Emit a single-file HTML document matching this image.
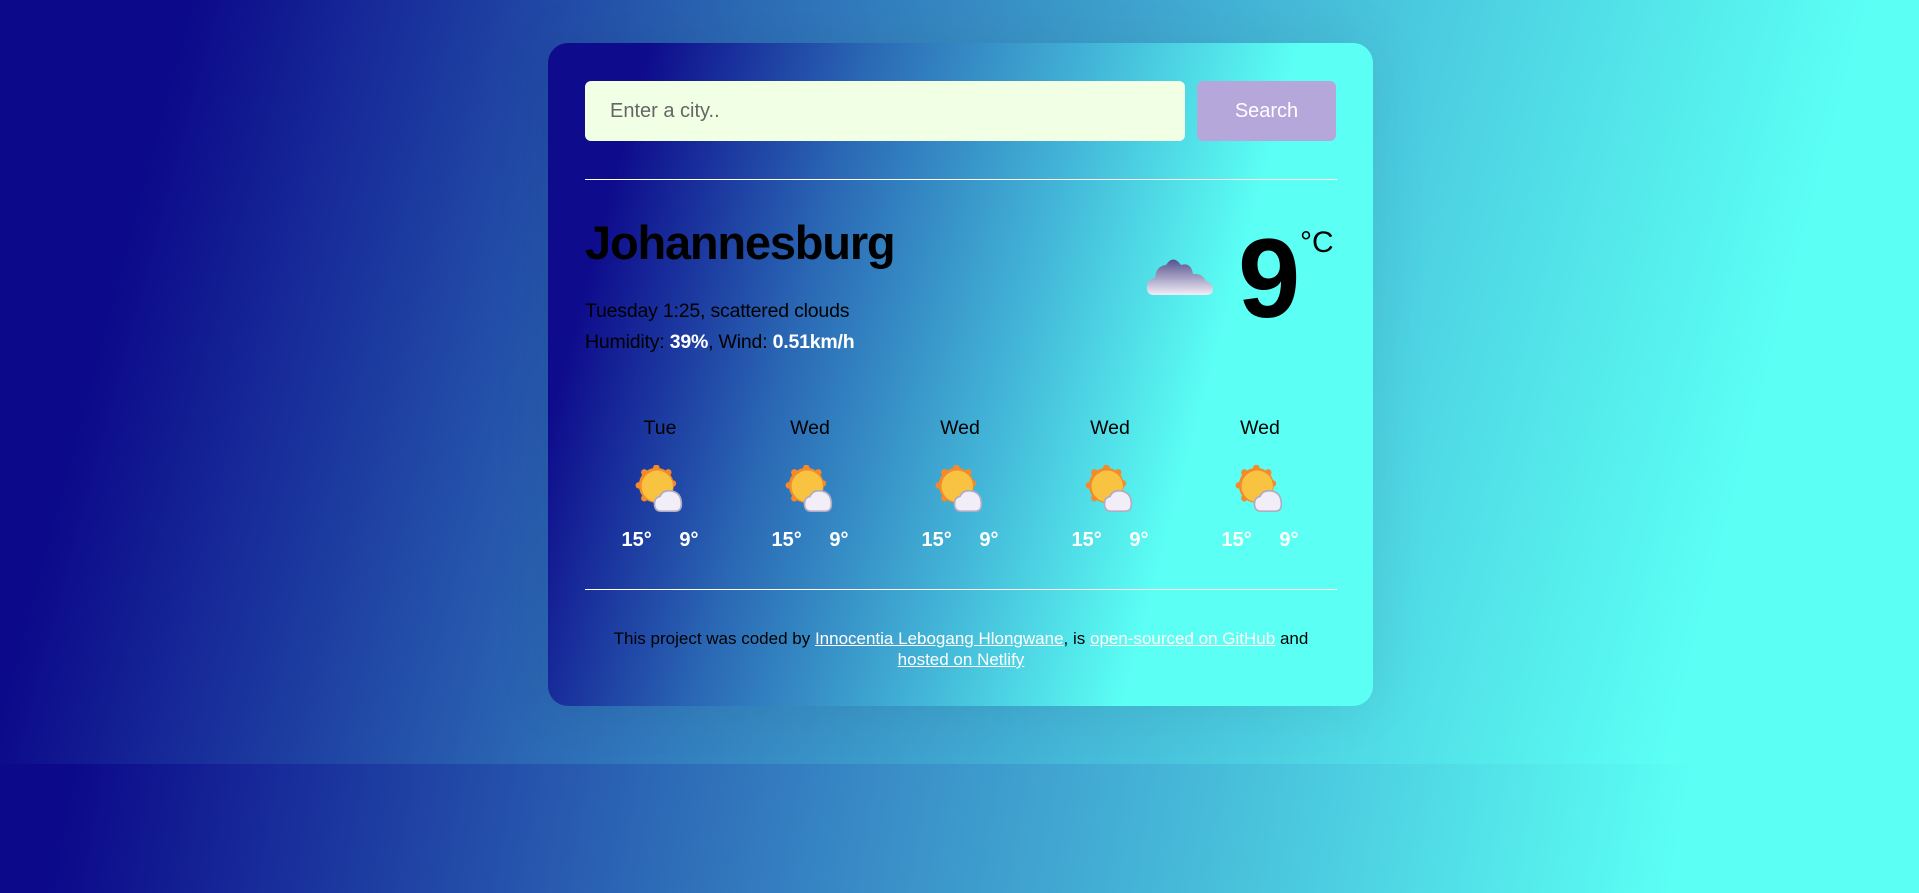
<!DOCTYPE html>
<html><head><meta charset="utf-8"><style>
html{background:linear-gradient(100deg,#0c0a8a 10%,#3a8fc8 50%,#5bfff4 88%);height:893px}
body{margin:0;width:1919px;height:764px;background:linear-gradient(105deg,#0c0a8a 9%,#2c6ab5 35%,#45b8d8 60%,#5bfff4 88%);font-family:"Liberation Sans",Arial,sans-serif;position:relative;overflow:hidden}
.card{position:absolute;left:548px;top:43px;width:825px;height:663px;border-radius:20px;background:linear-gradient(105deg,#0e0b8c 10%,#2a67b4 32%,#43b6d8 55%,#5bfff4 75%);box-shadow:0 0 60px rgba(0,0,0,.08)}
.in{position:absolute;left:37px;top:38px;width:600px;height:60px;background:#f1ffe4;border-radius:6px;font-size:20px;color:#666;line-height:60px;padding-left:25px;box-sizing:border-box}
.btn{position:absolute;left:649px;top:38px;width:139px;height:60px;background:#b5a7da;border-radius:6px;color:#fff;font-size:20px;line-height:60px;text-align:center}
.hr{position:absolute;left:37px;width:752px;height:1px;background:#fff}
.city{position:absolute;left:37px;top:172px;font-size:47px;font-weight:bold;color:#000;letter-spacing:-1.2px}
.line{position:absolute;left:37px;font-size:19.5px;color:#000;letter-spacing:-0.2px}
.line b{color:#fff}
.big{position:absolute;left:690px;font-size:112px;font-weight:bold;color:#000;line-height:1}
.unit{position:absolute;left:752px;top:183px;font-size:30px;color:#000}
.day{position:absolute;top:374px;width:150px;text-align:center;font-size:19.5px;color:#000}
.ic{position:absolute;top:422px}
.t{position:absolute;top:486px;width:150px;text-align:center;font-size:20px;font-weight:bold;color:#fff;word-spacing:22px}
.foot{position:absolute;left:37px;top:585px;width:752px;text-align:center;font-size:17px;color:#000;line-height:21px}
.foot a{color:#fff;text-decoration:underline}
</style></head><body>
<div class="card">
<div class="in">Enter a city..</div>
<div class="btn">Search</div>
<div class="hr" style="top:136px"></div>
<div class="city">Johannesburg</div>
<div class="line" style="top:257px">Tuesday 1:25, scattered clouds</div>
<div class="line" style="top:288px">Humidity: <b>39%</b>, Wind: <b>0.51km/h</b></div>
<svg style="position:absolute;left:598px;top:206px" width="70" height="48" viewBox="0 0 70 48"><defs><linearGradient id="cg" x1="0" y1="0" x2="0" y2="1"><stop offset="0" stop-color="#55508c"/><stop offset="1" stop-color="#f2eef8"/></linearGradient></defs><path d="M8 46 Q0 46 1 37 Q2 30 9 29 Q10 17 20 16 Q27 5 35 16 Q45 13 47 25 Q56 24 60 32 Q67 34 67 40 Q67 46 60 46 Z" fill="url(#cg)"/></svg>
<div class="big" style="top:180px">9</div>
<div class="unit">°C</div>
<div class="hr" style="top:546px"></div>
<div class="day" style="left:37px">Tue</div>
<div class="day" style="left:187px">Wed</div>
<div class="day" style="left:337px">Wed</div>
<div class="day" style="left:487px">Wed</div>
<div class="day" style="left:637px">Wed</div>
<svg width="0" height="0" style="position:absolute"><defs><g id="sc"><g fill="#f58a2a"><circle cx="22" cy="22" r="19"/><circle cx="22" cy="3" r="3.5"/><circle cx="35" cy="8" r="3.5"/><circle cx="9" cy="8" r="3.5"/><circle cx="3" cy="22" r="3.5"/><circle cx="9" cy="36" r="3.5"/><circle cx="40" cy="20" r="3.5"/></g><circle cx="23" cy="23" r="17" fill="#f8c341"/><path d="M27 50 Q20 50 20 42 Q20 35 26 34 Q29 27 37 28 Q48 29 49 40 Q50 50 43 50 Z" fill="#f1eef7" stroke="#b3aac6" stroke-width="1.8"/></g></defs></svg>
<svg class="ic" style="left:86px" width="52" height="48" viewBox="0 0 52 52"><use href="#sc"/></svg>
<svg class="ic" style="left:236px" width="52" height="48" viewBox="0 0 52 52"><use href="#sc"/></svg>
<svg class="ic" style="left:386px" width="52" height="48" viewBox="0 0 52 52"><use href="#sc"/></svg>
<svg class="ic" style="left:536px" width="52" height="48" viewBox="0 0 52 52"><use href="#sc"/></svg>
<svg class="ic" style="left:686px" width="52" height="48" viewBox="0 0 52 52"><use href="#sc"/></svg>
<div class="t" style="left:37px">15° 9°</div>
<div class="t" style="left:187px">15° 9°</div>
<div class="t" style="left:337px">15° 9°</div>
<div class="t" style="left:487px">15° 9°</div>
<div class="t" style="left:637px">15° 9°</div>
<div class="foot">This project was coded by <a>Innocentia Lebogang Hlongwane</a>, is <a>open-sourced on GitHub</a> and<br><a>hosted on Netlify</a></div>
</div>
</body></html>
